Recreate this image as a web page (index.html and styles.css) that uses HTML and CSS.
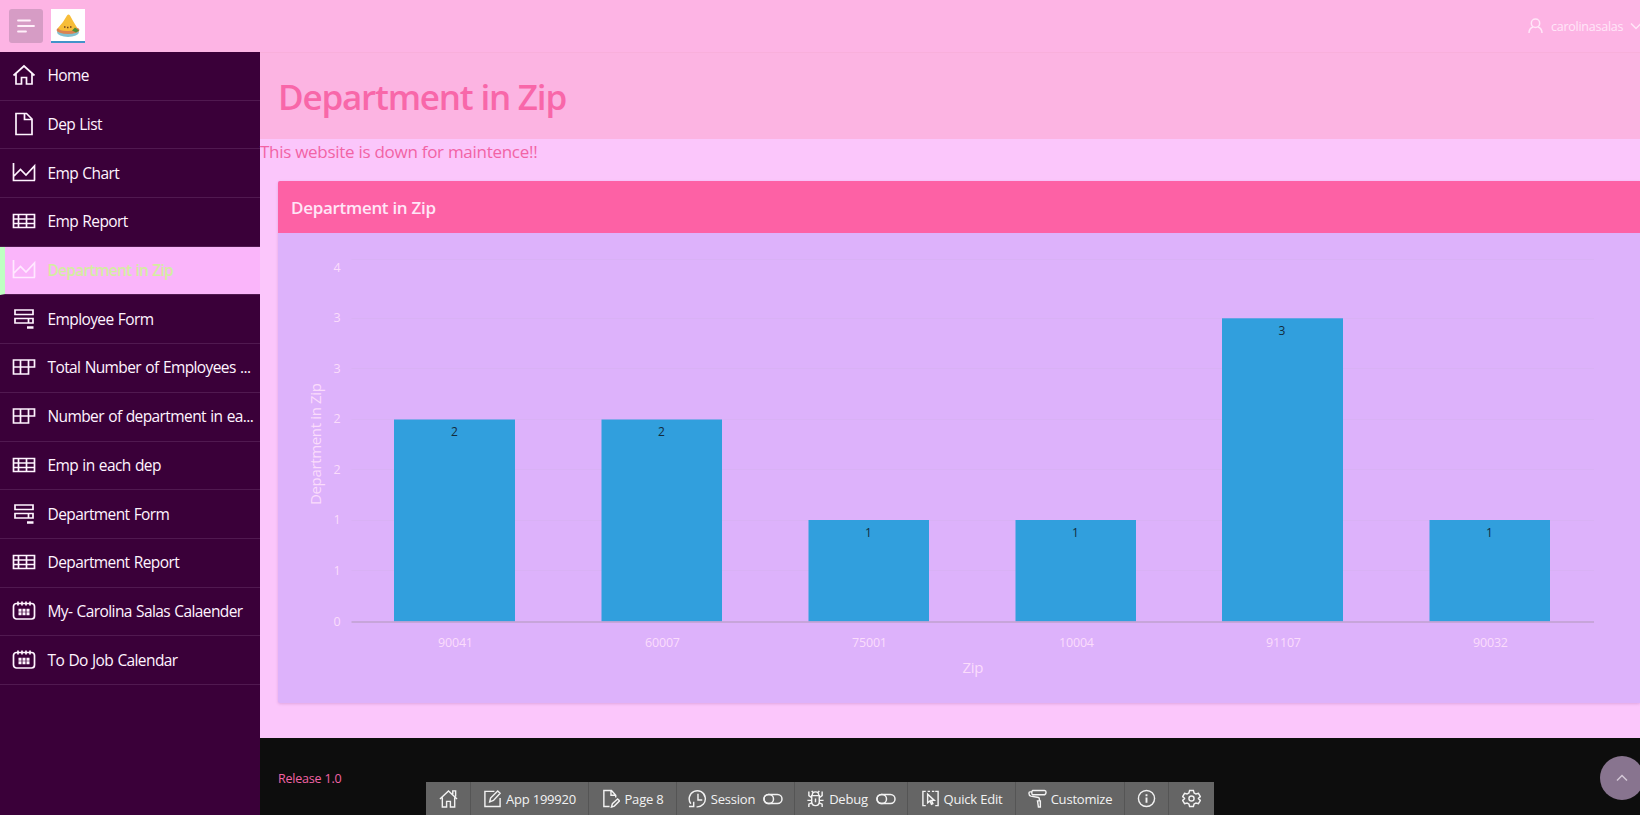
FILE: index.html
```html
<!DOCTYPE html>
<html lang="en">
<head>
<meta charset="utf-8">
<title>Department in Zip</title>
<link rel="stylesheet" href="styles.css">
</head>
<body>
<svg class="defs" width="0" height="0" aria-hidden="true">
  <symbol id="home" viewBox="0 0 24 24"><path d="M1.500 12.500 12 3l10.500 9.500M4 10.500V21h5.500v-6.500h5V21H20V10.500"/></symbol>
  <symbol id="file" viewBox="0 0 24 24"><path d="M4 1.500h10.500l5.500 5.500v15.500H4zM12.500 1.500v6H20"/></symbol>
  <symbol id="chart" viewBox="0 0 24 24"><path d="M1.500 2v17.500H23M1.500 15.500l7-7 5.500 5.500L22.500 5v14.500"/></symbol>
  <symbol id="table" viewBox="0 0 24 24"><path d="M1.500 5.500h21v13h-21zM1.500 10h21M1.500 14.500h21M6.500 5.500v13M14.500 5.500v13"/></symbol>
  <symbol id="form" viewBox="0 0 24 24"><path d="M3 3h18v4.500H3zM3 11.500h18V16H3zM16.500 11.500V16"/><path d="M15 20.500h6.500" stroke-width="2.500"/></symbol>
  <symbol id="pivot" viewBox="0 0 24 24"><path d="M1.500 5h21v7h-6v7h-15zM1.500 12h15M8.500 5v14M16.500 5v7"/></symbol>
  <symbol id="calendar" viewBox="0 0 24 24"><rect x="1.500" y="4.500" width="21" height="15.500" rx="3"/><path d="M6 2.500v4M10 2.500v4M14 2.500v4M18 2.500v4"/><path d="M6.500 11.200h3m1 0h3m1 0h3M6.500 14.800h3m1 0h3m1 0h3" stroke-width="3"/></symbol>
</svg>

<header class="header">
  <button class="menu-btn" aria-label="Menu"><svg width="18" height="14" viewBox="0 0 18 14"><path d="M1 1.500h12M1 7h16M1 12.500h8"/></svg></button>
  <span class="logo"><svg width="34" height="34" viewBox="0 0 34 34">
    <ellipse cx="17" cy="23" rx="11" ry="5" fill="#80c0d0"/>
    <ellipse cx="17" cy="21" rx="11.500" ry="4" fill="#d98352"/>
    <path d="M7 19Q12 14 16 6.500q1.500-2 3 0 4 7.500 7 12Q25 22 16.500 22 8 22 7 19z" fill="#f7bd38"/>
    <path d="M13 18h1.500m1.500.5h1.500m1.500-.5H20.500" stroke="#704020" stroke-width="1.500"/><path d="m21 21.500 3-3 4 3-3 2z" fill="#4c8f3a"/>
  </svg></span>
  <span class="user"><svg width="15" height="16" viewBox="0 0 15 16"><circle cx="7.500" cy="5.200" r="4.200"/><path d="M1 15q0-4.500 4-6M14 15q0-4.500-4-6"/></svg><span class="user-name">carolinasalas</span><svg class="caret" width="12" height="8" viewBox="0 0 12 8"><path d="m1 1.500 5 5 5-5"/></svg></span>
</header>

<div class="layout">
  <nav class="side">
    <a class="item"><svg class="ico"><use href="#home"/></svg><span>Home</span></a>
    <a class="item"><svg class="ico"><use href="#file"/></svg><span>Dep List</span></a>
    <a class="item"><svg class="ico"><use href="#chart"/></svg><span>Emp Chart</span></a>
    <a class="item"><svg class="ico"><use href="#table"/></svg><span>Emp Report</span></a>
    <a class="item active"><svg class="ico"><use href="#chart"/></svg><span>Department in Zip</span></a>
    <a class="item"><svg class="ico"><use href="#form"/></svg><span>Employee Form</span></a>
    <a class="item"><svg class="ico"><use href="#pivot"/></svg><span>Total Number of Employees ...</span></a>
    <a class="item"><svg class="ico"><use href="#pivot"/></svg><span>Number of department in ea...</span></a>
    <a class="item"><svg class="ico"><use href="#table"/></svg><span>Emp in each dep</span></a>
    <a class="item"><svg class="ico"><use href="#form"/></svg><span>Department Form</span></a>
    <a class="item"><svg class="ico"><use href="#table"/></svg><span>Department Report</span></a>
    <a class="item"><svg class="ico"><use href="#calendar"/></svg><span>My- Carolina Salas Calaender</span></a>
    <a class="item"><svg class="ico"><use href="#calendar"/></svg><span>To Do Job Calendar</span></a>
  </nav>

  <main class="main">
    <div class="title-bar"><h1>Department in Zip</h1></div>
    <p class="notice">This website is down for maintence!!</p>
    <section class="region">
      <h2>Department in Zip</h2>
      <svg class="plot" width="1362" height="470" viewBox="278 233 1362 470">
        <path class="grid" d="M351.500 259.500H1594M351.500 318.500H1594M351.500 368.500H1594M351.500 419.500H1594M351.500 469.500H1594M351.500 520.500H1594M351.500 570.500H1594"/>
        <g class="bars">
          <rect x="394" y="419.500" width="121" height="202"/><rect x="601.500" y="419.500" width="120.500" height="202"/><rect x="808.500" y="520" width="120.500" height="101.500"/><rect x="1015.500" y="520" width="120.500" height="101.500"/><rect x="1222" y="318.300" width="121" height="303.200"/><rect x="1429.500" y="520" width="120.500" height="101.500"/>
        </g>
        <path class="axis" d="M351.500 622H1594"/>
        <g class="tick">
          <text x="337" y="271.500">4</text><text x="337" y="321.500">3</text><text x="337" y="372.500">3</text><text x="337" y="423">2</text><text x="337" y="473.500">2</text><text x="337" y="524">1</text><text x="337" y="575">1</text><text x="337" y="625.500">0</text>
          <text x="455.500" y="647" textLength="35">90041</text><text x="662.500" y="647" textLength="35">60007</text><text x="869.500" y="647" textLength="35">75001</text><text x="1076.500" y="647" textLength="35">10004</text><text x="1283.500" y="647" textLength="35">91107</text><text x="1490.500" y="647" textLength="35">90032</text>
        </g>
        <g class="value">
          <text x="454.500" y="436">2</text><text x="661.500" y="436">2</text><text x="868.500" y="537">1</text><text x="1075.500" y="537">1</text><text x="1282" y="335">3</text><text x="1489.500" y="537">1</text>
        </g>
        <g class="axis-title">
          <text x="973" y="672.500" textLength="21">Zip</text>
          <text transform="translate(321 444) rotate(-90)" textLength="122">Department in Zip</text>
        </g>
      </svg>
    </section>
    <footer class="footer">Release 1.0</footer>
  </main>
</div>

<button class="to-top" aria-label="Top"><svg width="12" height="8" viewBox="0 0 12 8"><path d="m1 6.500 5-5 5 5"/></svg></button>

<div class="devbar">
  <a class="w1"><svg class="dico" viewBox="0 0 20 20"><path d="M1 10.500 10 2l9 8.500M3.500 9v10H8v-6h4v6h4.500V9M14.500 5.500V2h3v6"/></svg></a>
  <a class="w2"><svg class="dico" viewBox="0 0 20 20"><path d="M12 2.500H2v16h16v-9M7 13.500l1-4L15.500 2 18 4.500 11 12z"/></svg><span>App 199920</span></a>
  <a class="w3"><svg class="dico" viewBox="0 0 20 20"><path d="M9 18.500H3v-17h8l4.500 5V9M10.500 1.500v5h5M11 19l1-3.500 5.500-5 2 2-5.500 5.500z"/></svg><span>Page 8</span></a>
  <a class="w4"><svg class="dico" viewBox="0 0 20 20"><path d="M3 15.500A8.500 8.500 0 1 1 9 18.800M1 18.500h5v-5M10.500 5v6.500H15"/></svg><span>Session</span><svg class="toggle" viewBox="0 0 20 12"><rect x="1" y="1.500" width="18" height="9" rx="4.500"/><rect x="1" y="1.500" width="9.500" height="9" rx="4.500"/></svg></a>
  <a class="w5"><svg class="dico" viewBox="0 0 20 20"><path d="M6 7h8v6.500q0 4-4 4t-4-4zM6.500 7q0-4 3.500-4t3.500 4M10 10v4M6 9 3 7V2.500M14 9l3-2V2.500M1.500 12H6M14 12h4.500M6 14.500 3 16v3M14 14.500l3 1.500v3M7.500 4 6 2M12.500 4 14 2"/></svg><span>Debug</span><svg class="toggle" viewBox="0 0 20 12"><rect x="1" y="1.500" width="18" height="9" rx="4.500"/><rect x="1" y="1.500" width="9.500" height="9" rx="4.500"/></svg></a>
  <a class="w6"><svg class="dico" viewBox="0 0 20 20"><path d="M5 2.500H2v15h3M15 2.500h3v15h-3M7 2.500h2.500M11.500 2.500H14M7 5.500v9l2.500-2 1.500 3.500 1.500-.7-1.500-3.300h3z"/></svg><span>Quick Edit</span></a>
  <a class="w7"><svg class="dico" viewBox="0 0 20 20"><path d="M5 1.500h12.500q1.500 0 1.500 2t-1.500 2.500H5q-1 0-1-2t1-2.500zM4 3H2Q1 3 1 4.500q0 2.500 2 3l8 1.500q1 .3 1 1.500V12M10 12.500h3V19h-2z"/></svg><span>Customize</span></a>
  <a class="w8"><svg class="dico" viewBox="0 0 20 20"><circle cx="10" cy="10" r="8.500"/><path d="M10 9v5.500M10 5.500v2" stroke-width="2"/></svg></a>
  <a class="w9"><svg class="dico" viewBox="0 0 20 20"><circle cx="10" cy="10" r="2.700"/><path d="M8 1.500h4l.7 2.700 2 1.100 2.600-.8 2 3.500-2 1.900v.2l2 1.900-2 3.500-2.600-.8-2 1.100-.7 2.700H8l-.7-2.700-2-1.100-2.600.8-2-3.500 2-1.900V9.900l-2-1.900 2-3.500 2.600.8 2-1.100z"/></svg></a>
</div>
</body>
</html>
```
FILE: styles.css
```css
* { box-sizing: border-box; }
body {
  margin: 0;
  height: 815px;
  overflow: hidden;
  background: #fbc6fb;
  font-family: "Open Sans", "Noto Sans", sans-serif;
}
svg { fill: none; stroke: currentColor; stroke-width: 1.5; flex: none; display: block; }
svg.defs { position: absolute; }
button { border: 0; padding: 0; display: flex; align-items: center; justify-content: center; }

.header {
  height: 52px;
  display: flex;
  align-items: center;
  padding-left: 9px;
  background: #fdb4e4;
}
.menu-btn { width: 34px; height: 34px; border-radius: 3px; background: #d69cc5; color: #fff0fa; }
.menu-btn svg { stroke-width: 1.8; stroke-linecap: round; }
.logo { margin-left: 8px; width: 34px; height: 34px; background: #fff; border-bottom: 2px solid #4393c9; }
.logo svg { stroke: none; }
.user { margin-left: auto; display: flex; align-items: center; color: #ffe6f8; font-size: 12.500px; }
.user-name { margin: 0 7px 0 8px; width: 72px; white-space: nowrap; letter-spacing: -.25px; }
.caret { margin-right: -2px; }

.layout { display: flex; height: 763px; }
.side { width: 260px; flex: none; background: #3a0039; color: #fff4ff; }
.item {
  height: 48.700px;
  display: flex;
  align-items: center;
  gap: 11.500px;
  padding: 0 0 1px 12px;
  border-bottom: 1px solid #501950;
  font-size: 15.500px;
  letter-spacing: -.6px;
  word-spacing: .8px;
  white-space: nowrap;
}
.ico { width: 24px; height: 24px; stroke-width: 1.7; }
.item.active {
  padding-left: 7px;
  border-left: 5px solid #bfffc2;
  background: #fab5fa;
  color: #d3eda0;
  font-weight: 600;
  letter-spacing: -.75px;
}
.active .ico { color: #ffe9ff; }

.main { flex: 1; min-width: 0; display: flex; flex-direction: column; }
.title-bar { height: 87px; flex: none; padding: 20px 18px; background: #fcb4e2; border-top: 1px solid #f9afdb; }
h1 { margin: 0; font-size: 35px; line-height: 48px; font-weight: 600; letter-spacing: -1.200px; color: #f867a9; }
.notice { margin: 0; height: 42px; flex: none; font-size: 17px; line-height: 26px; letter-spacing: -.28px; color: #f263a5; }
.region { margin-left: 18px; height: 522px; flex: none; background: #ddb2fb; border-radius: 2px 0 0 2px; box-shadow: 0 1px 3px rgba(120, 40, 120, .2); }
h2 { margin: 0; height: 52px; padding-left: 13px; border-radius: 2px 0 0; font-size: 17px; line-height: 53px; font-weight: 600; letter-spacing: -.3px; background: #fd61a5; color: #ffe6f7; }
.footer { margin-top: 35px; flex: 1; padding: 31px 18px; background: #0d0d0d; color: #f263a5; font-size: 12.500px; line-height: 20px; letter-spacing: -.2px; }

.plot text { stroke: none; text-anchor: middle; }
.grid { stroke: #d9b1f5; stroke-width: 1; }
.axis { stroke: #bfa1cf; stroke-width: 1.5; }
.bars { fill: #319fdd; stroke: none; }
.tick { fill: #fbdcfb; font-size: 12.500px; }
.value { fill: #132b3c; font-size: 12px; }
.axis-title { fill: #fbdcfb; font-size: 15px; }

.to-top { position: absolute; left: 1600px; top: 756px; width: 44px; height: 44px; border-radius: 50%; background: #88748f; color: #d3c7d6; }

.devbar { position: absolute; left: 426px; top: 782px; height: 33px; display: flex; background: #656565; color: #f2f2f2; font-size: 13px; letter-spacing: -.2px; }
.devbar a { display: flex; align-items: center; justify-content: center; gap: 4px; border-right: 1px solid #555; white-space: nowrap; }
.devbar a:last-child { border-right: 0; }
.dico { width: 19px; height: 19px; }
.toggle { width: 20px; height: 12px; margin-left: 4px; }
.w1 { width: 45px; }
.w2 { width: 118px; }
.w3 { width: 88px; }
.w4 { width: 118px; }
.w5 { width: 113px; }
.w6 { width: 108px; }
.w7 { width: 109px; }
.w8 { width: 44px; }
.w9 { width: 45px; }
```
